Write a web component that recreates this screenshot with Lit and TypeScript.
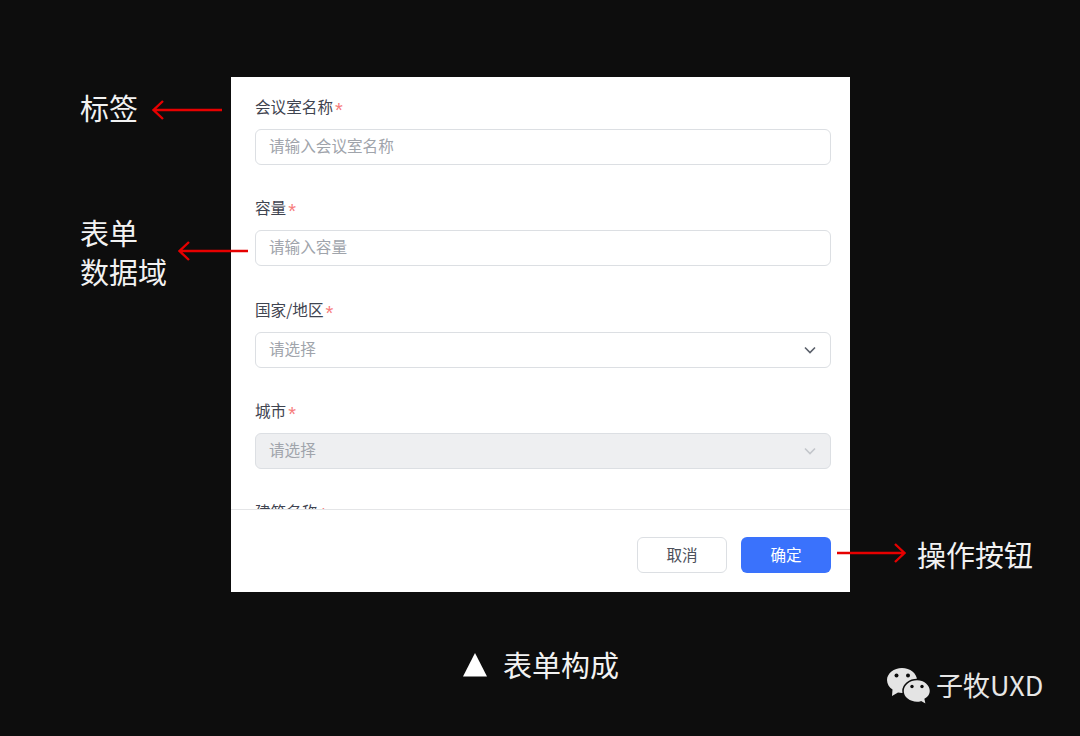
import { html, css, LitElement, svg } from 'lit';
import { customElement } from 'lit/decorators.js';

interface Field {
  label: string;
  placeholder: string;
  kind: 'input' | 'select' | 'disabled';
}

const FIELDS: Field[] = [
  { label: '会议室名称', placeholder: '请输入会议室名称', kind: 'input' },
  { label: '容量', placeholder: '请输入容量', kind: 'input' },
  { label: '国家/地区', placeholder: '请选择', kind: 'select' },
  { label: '城市', placeholder: '请选择', kind: 'disabled' },
  { label: '建筑名称', placeholder: '请选择', kind: 'select' },
];

const chevron = svg`<path d="M1 1.5 6 6.5 11 1.5" fill="none" stroke="currentColor" stroke-width="1.6"/>`;

@customElement('app-root')
export class AppRoot extends LitElement {
  static styles = css`
    * {
      box-sizing: border-box;
    }

    :host {
      display: block;
      font-family: 'Noto Sans CJK SC', 'Noto Sans', sans-serif;
    }

    .page {
      position: relative;
      width: 1080px;
      height: 736px;
      padding: 77px 0 0 231px;
      background: #0d0d0d;
      overflow: hidden;
    }

    .dialog {
      width: 619px;
      height: 515px;
      background: #fff;
      display: flex;
      flex-direction: column;
    }

    .form {
      height: 432px;
      padding: 18px 19px 0 24px;
      overflow: hidden;
      display: flex;
      flex-direction: column;
      gap: 31.3px;
      flex-shrink: 0;
    }

    .field {
      display: flex;
      flex-direction: column;
      gap: 10px;
      flex-shrink: 0;
    }

    .label {
      height: 24px;
      font-size: 15.6px;
      line-height: 22px;
      color: #3f4450;
      display: flex;
      align-items: flex-start;
    }

    .star {
      margin-left: 2px;
      padding-top: 3px;
      color: #f77c7c;
      font-size: 20px;
      line-height: 24px;
      font-family: 'Liberation Sans', sans-serif;
    }

    .control {
      height: 36px;
      border: 1px solid #dcdfe3;
      border-radius: 6px;
      padding: 0 12px 4px 13px;
      display: flex;
      align-items: center;
      justify-content: space-between;
      font-size: 15.6px;
      color: #a0a4ab;
    }

    .control.disabled {
      background: #eeeff1;
    }

    .chevron {
      width: 12px;
      height: 8px;
      margin: 4px 2px 0 0;
      color: #5b606b;
    }

    .disabled .chevron {
      color: #c3c6cb;
    }

    .footer {
      flex: 1;
      border-top: 1px solid #e4e5e7;
      padding: 27px 19px 0 0;
      display: flex;
      justify-content: flex-end;
      gap: 14px;
    }

    .btn {
      width: 90px;
      height: 36px;
      border-radius: 6px;
      padding-bottom: 3px;
      display: flex;
      align-items: center;
      justify-content: center;
      font-size: 15.6px;
    }

    .btn.cancel {
      border: 1px solid #dcdfe3;
      color: #4c505a;
    }

    .btn.ok {
      background: #3a72fc;
      color: #fff;
    }

    .note {
      position: absolute;
      color: #f2f2f2;
      font-size: 29px;
      line-height: 39px;
      white-space: nowrap;
    }

    .arrow {
      position: absolute;
      overflow: visible;
    }

    .triangle {
      position: absolute;
      left: 463px;
      top: 652px;
    }

    .wechat {
      position: absolute;
      left: 887px;
      top: 667px;
    }

    .brand {
      position: absolute;
      left: 936px;
      top: 665px;
      font-size: 27px;
      line-height: 40px;
      color: #e6e6e6;
      white-space: nowrap;
    }
  `;

  private _renderField(field: Field) {
    return html`
      <div class="field">
        <div class="label">${field.label}<span class="star">*</span></div>
        <div class="control ${field.kind}">
          <span>${field.placeholder}</span>
          ${field.kind === 'input'
            ? ''
            : html`<svg class="chevron" viewBox="0 0 12 8">${chevron}</svg>`}
        </div>
      </div>
    `;
  }

  private _renderArrow(x: number, y: number, width: number, dir: 'left' | 'right') {
    const head =
      dir === 'left'
        ? `M11 1 1.5 10 11 19M2 10H${width}`
        : `M${width - 11} 1 ${width - 1.5} 10 ${width - 11} 19M${width - 2} 10H0`;
    return html`
      <svg
        class="arrow"
        style="left:${x}px;top:${y}px"
        width=${width}
        height="20"
        viewBox="0 0 ${width} 20"
      >
        <path d=${head} fill="none" stroke="#e60000" stroke-width="2.4" />
      </svg>
    `;
  }

  render() {
    return html`
      <div class="page">
        <div class="dialog">
          <div class="form">${FIELDS.map(f => this._renderField(f))}</div>
          <div class="footer">
            <div class="btn cancel">取消</div>
            <div class="btn ok">确定</div>
          </div>
        </div>

        <div class="note" style="left:80px;top:88px">标签</div>
        ${this._renderArrow(152, 100, 70, 'left')}
        <div class="note" style="left:80px;top:213px">表单<br />数据域</div>
        ${this._renderArrow(178, 241, 70, 'left')}
        ${this._renderArrow(837, 543, 69, 'right')}
        <div class="note" style="left:917px;top:535px">操作按钮</div>

        <svg class="triangle" width="24" height="26" viewBox="0 0 24 26">
          <path d="M12 1 24 24.500H0Z" fill="#fff" />
        </svg>
        <div class="note" style="left:503px;top:645px">表单构成</div>

        <svg class="wechat" width="44" height="38" viewBox="0 0 44 38">
          <path
            d="M15 1C7 1 0 6.500 0 13c0 4 2.200 7.300 5.500 9.500L5 29l6-3.600c1.300.3 2.600.5 4 .5 8 0 15-5.500 15-12.900C30 6.500 23 1 15 1Z"
            fill="#e4e4e4"
          />
          <path
            d="M30 12.500C22.500 12.500 16 17.500 16 24s6.500 11.500 14 11.500c1.500 0 2.800-.2 4-.6L39.500 38l-1.300-5.800c3.300-2 5.300-4.900 5.300-8.200 0-6.500-6-11.500-13.500-11.500Z"
            fill="#e4e4e4"
            stroke="#0d0d0d"
            stroke-width="1.500"
          />
          <circle cx="9.500" cy="8.500" r="2" fill="#0d0d0d" />
          <circle cx="21" cy="8.500" r="2" fill="#0d0d0d" />
          <circle cx="25" cy="19.500" r="1.700" fill="#0d0d0d" />
          <circle cx="35" cy="19.500" r="1.700" fill="#0d0d0d" />
        </svg>
        <div class="brand">子牧UXD</div>
      </div>
    `;
  }
}
